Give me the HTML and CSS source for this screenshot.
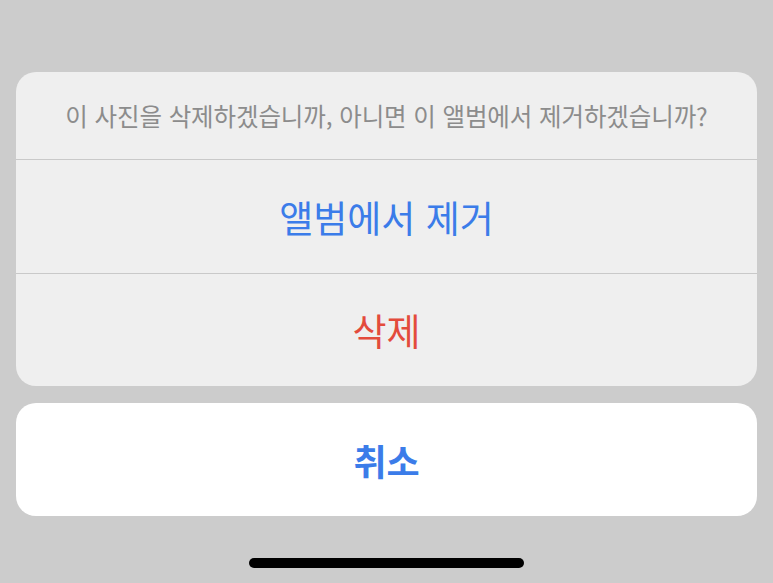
FILE: index.html
```html
<!DOCTYPE html>
<html lang="ko">
<head>
    <meta charset="UTF-8">
    <meta name="viewport" content="width=device-width, initial-scale=1.0">
    <title>Action Sheet</title>
    <link rel="stylesheet" href="styles.css">
</head>
<body>
    <!-- Action sheet -->
    <div class="sheet">
        <div class="group">
            <div class="title">이 사진을 삭제하겠습니까, 아니면 이 앨범에서 제거하겠습니까?</div>
            <button class="action">앨범에서 제거</button>
            <button class="action destructive">삭제</button>
        </div>
        <button class="cancel">취소</button>
    </div>

    <!-- Home indicator -->
    <div class="home-bar"></div>
</body>
</html>
```

FILE: styles.css
```css
body {
    margin: 0;
    padding: 0;
    background-color: #cccccc;
    font-family: "Noto Sans CJK KR", "Noto Sans", sans-serif;
    height: 583px;
    display: flex;
    flex-direction: column;
    overflow: hidden;
}

.sheet {
    padding: 72px 16px 0 16px;
    display: flex;
    flex-direction: column;
    gap: 17px;
}

.group {
    background-color: #efefef;
    border-radius: 20px;
    overflow: hidden;
    display: flex;
    flex-direction: column;
}

.title {
    height: 87px;
    display: flex;
    align-items: center;
    justify-content: center;
    font-size: 24.5px;
    letter-spacing: -0.1px;
    color: #8c8c8c;
    border-bottom: 1px solid #c9c9c9;
}

.action {
    height: 113px;
    border: none;
    background: none;
    font-family: inherit;
    font-size: 37px;
    color: #3b7ce9;
    padding: 0;
}

.action + .action {
    border-top: 1px solid #c9c9c9;
}

.destructive {
    color: #e34b3c;
}

.cancel {
    height: 113px;
    border: none;
    border-radius: 20px;
    background-color: #ffffff;
    font-family: inherit;
    font-size: 36px;
    font-weight: bold;
    color: #3b7ce9;
    padding: 0;
}

.home-bar {
    margin: 42px auto 0;
    width: 275px;
    height: 10px;
    border-radius: 5px;
    background-color: #000000;
}
```
